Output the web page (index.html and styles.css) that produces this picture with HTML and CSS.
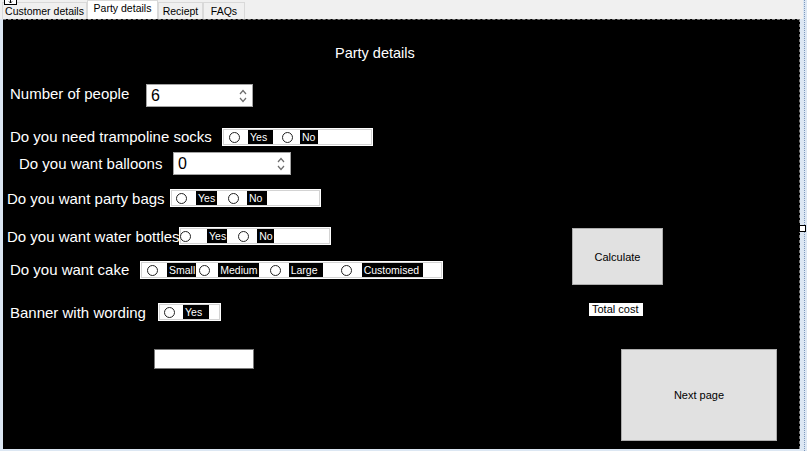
FILE: index.html
```html
<!DOCTYPE html>
<html>
<head>
<meta charset="utf-8">
<title>Party details</title>
<link rel="stylesheet" href="styles.css">
</head>
<body>
<div class="surface">
  <div class="tabbar">
    <svg class="handle" width="13" height="13" viewBox="0 0 13 13"><rect x="0.5" y="0.5" width="12" height="12" fill="#fff" stroke="#000"/><path d="M6.5 2v9M2 6.5h9M5 3.5l1.5-1.5 1.5 1.5M5 9.5l1.5 1.5 1.5-1.5M3.5 5l-1.5 1.5 1.5 1.5M9.5 5l1.5 1.5-1.5 1.5" fill="none" stroke="#000"/></svg>
    <div class="tab t-cust">Customer details</div>
    <div class="tab t-party active">Party details</div>
    <div class="tab t-rec">Reciept</div>
    <div class="tab t-faq">FAQs</div>
  </div>
  <div class="panel">
    <div class="left">
      <div class="title">Party details</div>

      <div class="row q-people">
        <span class="lbl">Number of people</span>
        <div class="num num-people"><span>6</span>
          <svg class="spin" width="8" height="16" viewBox="0 0 8 16"><path d="M1 6l3-3.5 3 3.5M1 10l3 3.5 3-3.5" fill="none" stroke="#6d6d6d" stroke-width="1.2"/></svg>
        </div>
      </div>

      <div class="row q-socks">
        <span class="lbl">Do you need trampoline socks</span>
        <div class="grp g-socks">
          <span class="rb m7"></span><span class="ol m8 w25">Yes</span>
          <span class="rb m9"></span><span class="ol m7 w18">No</span>
        </div>
      </div>

      <div class="row q-balloons">
        <span class="lbl">Do you want balloons</span>
        <div class="num num-balloons"><span>0</span>
          <svg class="spin" width="8" height="16" viewBox="0 0 8 16"><path d="M1 6l3-3.5 3 3.5M1 10l3 3.5 3-3.5" fill="none" stroke="#6d6d6d" stroke-width="1.2"/></svg>
        </div>
      </div>

      <div class="row q-bags">
        <span class="lbl">Do you want party bags</span>
        <div class="grp g-bags">
          <span class="rb m6"></span><span class="ol m9 w21">Yes</span>
          <span class="rb m11"></span><span class="ol m8 w20">No</span>
        </div>
      </div>

      <div class="row q-water">
        <span class="lbl">Do you want water bottles</span>
        <div class="grp g-water">
          <span class="rb m1"></span><span class="ol m16 w20">Yes</span>
          <span class="rb m11"></span><span class="ol m8 w16">No</span>
        </div>
      </div>

      <div class="row q-cake">
        <span class="lbl">Do you want cake</span>
        <div class="grp g-cake">
          <span class="rb m7"></span><span class="ol m9 w27">Small</span>
          <span class="rb m3"></span><span class="ol m8 w40">Medium</span>
          <span class="rb m11"></span><span class="ol m8 w34">Large</span>
          <span class="rb m18"></span><span class="ol m10 w61">Customised</span>
        </div>
      </div>

      <div class="row q-banner">
        <span class="lbl">Banner with wording</span>
        <div class="grp g-banner">
          <span class="rb m6"></span><span class="ol m8 w26">Yes</span>
        </div>
      </div>

      <div class="row q-text">
        <div class="txt"></div>
      </div>
    </div>

    <div class="right">
      <button class="btn calc">Calculate</button>
      <div class="total">Total cost</div>
      <button class="btn next">Next page</button>
    </div>
  </div>
  <div class="grip"></div>
</div>
<div class="edge"></div>
</body>
</html>
```

FILE: styles.css
```css
html, body {
  margin: 0;
  padding: 0;
}
body {
  width: 807px;
  height: 451px;
  overflow: hidden;
  background: #dce7f3;
  display: flex;
  font-family: "Liberation Sans", Arial, sans-serif;
}
.surface {
  width: 803px;
  height: 451px;
  flex: none;
  position: relative;
}
.edge {
  flex: none;
  width: 2px;
  height: 451px;
  margin-left: 1px;
  border-left: 1px dotted #7d97bb;
}
.grip {
  position: absolute;
  left: 799px;
  top: 225px;
  width: 7px;
  height: 7px;
  box-sizing: border-box;
  background: #fff;
  border: 1px solid #000;
  z-index: 3;
}

/* tabs */
.tabbar {
  height: 19px;
  background: #f0f0f0;
  display: flex;
  align-items: flex-end;
  padding-left: 2px;
  position: relative;
}
.handle {
  position: absolute;
  left: 4px;
  top: -8px;
  z-index: 2;
}
.tab {
  height: 17px;
  box-sizing: border-box;
  border: 1px solid #d9d9d9;
  border-bottom: none;
  background: #f0f0f0;
  color: #000;
  font-size: 10.5px;
  line-height: 16px;
  text-align: center;
  white-space: nowrap;
  flex: none;
}
.tab.active {
  height: 19px;
  background: #fff;
  line-height: 15px;
  position: relative;
  z-index: 1;
}
.t-cust { width: 85px; }
.t-party { width: 71px; }
.t-rec { width: 45px; }
.t-faq { width: 42px; }

/* panel */
.panel {
  margin-left: 3px;
  width: 797px;
  height: 430px;
  box-sizing: border-box;
  background: #000;
  border-top: 1px dashed #7a7a7a;
  border-right: 1px dashed #7a7a7a;
  display: flex;
  color: #fff;
}
.left {
  width: 557px;
  flex: none;
}
.right {
  display: flex;
  flex-direction: column;
  align-items: flex-start;
}
.title {
  margin-top: 24px;
  padding-left: 332px;
  font-size: 14.5px;
  line-height: 18px;
}

.row {
  display: flex;
  align-items: center;
}
.lbl {
  font-size: 15px;
  line-height: 16px;
  white-space: nowrap;
  flex: none;
  margin-bottom: 1px;
}

.q-people { margin-top: 22px; padding-left: 7px; }
.q-people .lbl { width: 136px; margin-bottom: 3px; }
.q-socks { margin-top: 21px; padding-left: 7px; }
.q-socks .lbl { width: 212px; }
.q-balloons { margin-top: 6px; padding-left: 16px; }
.q-balloons .lbl { width: 154px; margin-bottom: 0; margin-top: 1px; }
.q-bags { margin-top: 14px; padding-left: 4px; }
.q-bags .lbl { width: 163px; margin-bottom: 0; margin-top: 1px; }
.q-water { margin-top: 20px; padding-left: 4px; }
.q-water .lbl { width: 172px; margin-bottom: 0; margin-top: 1px; }
.q-cake { margin-top: 16px; padding-left: 7px; }
.q-cake .lbl { width: 130px; }
.q-banner { margin-top: 24px; padding-left: 7px; }
.q-banner .lbl { width: 148px; margin-bottom: 0; margin-top: 1px; }
.q-text { margin-top: 28px; padding-left: 151px; }

/* numeric up/down */
.num {
  box-sizing: border-box;
  height: 23px;
  background: #fff;
  border: 1px solid #a3a3a3;
  display: flex;
  align-items: center;
  padding-left: 4px;
  color: #000;
  font-size: 16px;
  flex: none;
}
.num-people { width: 107px; }
.num-balloons { width: 118px; }
.spin {
  margin-left: auto;
  margin-right: 5px;
}

/* radio groups */
.grp {
  height: 18px;
  background: #fff;
  display: flex;
  align-items: center;
  flex: none;
  box-shadow: inset 0 0 0 1px #fff, inset 0 0 0 2px #d3d3d3;
}
.g-socks { width: 151px; }
.g-bags { width: 151px; }
.g-water { width: 152px; }
.g-cake { width: 303px; }
.g-banner { width: 63px; }

.rb {
  width: 11px;
  height: 11px;
  box-sizing: border-box;
  border: 1px solid #222;
  border-radius: 50%;
  background: #fff;
  flex: none;
}
.ol {
  height: 14px;
  line-height: 14px;
  box-sizing: border-box;
  padding: 0 1px 0 2px;
  background: #000;
  color: #fff;
  font-size: 10.5px;
  white-space: nowrap;
  flex: none;
}

.m1 { margin-left: 1px; }
.m3 { margin-left: 3px; }
.m6 { margin-left: 6px; }
.m7 { margin-left: 7px; }
.m8 { margin-left: 8px; }
.m9 { margin-left: 9px; }
.m10 { margin-left: 10px; }
.m11 { margin-left: 11px; }
.m16 { margin-left: 16px; }
.m18 { margin-left: 18px; }
.w16 { min-width: 16px; }
.w18 { min-width: 18px; }
.w20 { min-width: 20px; }
.w21 { min-width: 21px; }
.w25 { min-width: 25px; }
.w26 { min-width: 26px; }
.w27 { min-width: 27px; }
.w34 { min-width: 34px; }
.w40 { min-width: 40px; }
.w61 { min-width: 61px; }

.txt {
  width: 100px;
  height: 20px;
  box-sizing: border-box;
  background: #fff;
  border: 1px solid #7a7a7a;
}

/* buttons */
.btn {
  box-sizing: border-box;
  background: #e1e1e1;
  border: 1px solid #adadad;
  color: #000;
  font-family: "Liberation Sans", Arial, sans-serif;
  font-size: 11px;
  padding: 0;
  margin: 0;
  display: flex;
  align-items: center;
  justify-content: center;
  flex: none;
}
.calc {
  margin-top: 208px;
  margin-left: 12px;
  width: 91px;
  height: 57px;
}
.total {
  margin-top: 18px;
  margin-left: 29px;
  width: 54px;
  height: 13px;
  box-sizing: border-box;
  padding-left: 3px;
  background: #fff;
  color: #000;
  font-size: 11px;
  line-height: 13px;
  white-space: nowrap;
}
.next {
  margin-top: 33px;
  margin-left: 61px;
  width: 156px;
  height: 92px;
}
```
